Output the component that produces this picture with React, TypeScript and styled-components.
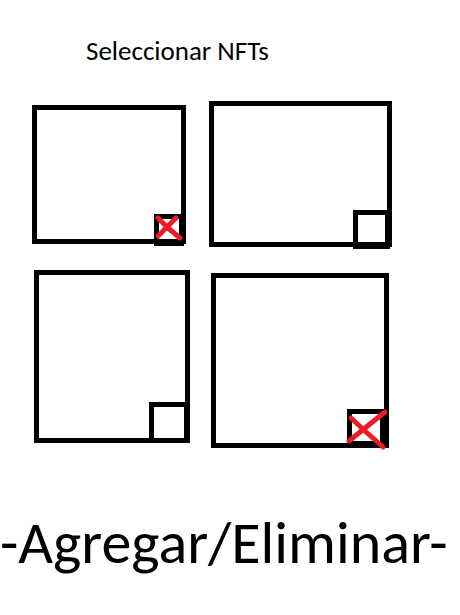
import React, { useState } from "react";
import styled, { createGlobalStyle } from "styled-components";

const GlobalStyle = createGlobalStyle`
  *, *::before, *::after { box-sizing: border-box; }
  body {
    margin: 0;
    background: #fff;
    color: #000;
    font-family: Carlito, Lato, "Open Sans", sans-serif;
  }
`;

const Page = styled.main`
  display: flex;
  flex-direction: column;
  padding-top: 35px;
`;

const Title = styled.h1`
  margin: 0 0 34px;
  padding-left: 86px;
  font-size: 27px;
  line-height: 32px;
  font-weight: 400;
`;

const Gallery = styled.section`
  display: grid;
  grid-template-columns: 177fr 183fr;
  row-gap: 23px;
  align-items: start;
  padding: 0 68px 0 32px;
`;

const Card = styled.article<{ $height: number; $inset: string }>`
  position: relative;
  height: ${(p) => p.$height}px;
  margin: ${(p) => p.$inset};
  border: 5px solid #000;
`;

const Picker = styled.label<{ $size: [number, number]; $corner: [number, number] }>`
  position: absolute;
  width: ${(p) => p.$size[0]}px;
  height: ${(p) => p.$size[1]}px;
  right: ${(p) => p.$corner[0]}px;
  bottom: ${(p) => p.$corner[1]}px;
  cursor: pointer;
`;

const Tick = styled.input`
  appearance: none;
  display: block;
  width: 100%;
  height: 100%;
  margin: 0;
  border: 5px solid #000;
  cursor: pointer;
`;

const Cross = styled.svg`
  position: absolute;
  inset: 0;
  width: 100%;
  height: 100%;
  overflow: visible;
  pointer-events: none;
`;

const Action = styled.button`
  margin: 55px 0 0;
  padding: 0;
  border: 0;
  background: none;
  color: inherit;
  font: inherit;
  font-size: 60px;
  line-height: 80px;
  text-align: left;
  white-space: nowrap;
  cursor: pointer;
`;

type Nft = {
  id: number;
  height: number;
  inset: string;
  size: [number, number];
  corner: [number, number];
  cross: string;
  selected: boolean;
};

const nfts: Nft[] = [
  { id: 1, height: 139, inset: "4px 23px 0 0", size: [30, 32], corner: [-3, -7], cross: "M4 4 L14 14 L26 24 M22 4 L13 13 L4 22", selected: true },
  { id: 2, height: 146, inset: "0", size: [37, 39], corner: [-3, -7], cross: "M4 5 L33 35 M33 4 L4 34", selected: false },
  { id: 3, height: 173, inset: "0 19px 0 2px", size: [40, 41], corner: [-4, -5], cross: "M4 5 L36 37 M36 4 L4 36", selected: false },
  { id: 4, height: 175, inset: "3px 3px 0 2px", size: [38, 37], corner: [-1, -3], cross: "M4 9 L18 22 L36 38 M38 3 L18 19 L2 32", selected: true },
];

export default function App() {
  const [items, setItems] = useState(nfts);

  const toggle = (id: number) =>
    setItems((list) => list.map((n) => (n.id === id ? { ...n, selected: !n.selected } : n)));

  return (
    <>
      <GlobalStyle />
      <Page>
        <Title>Seleccionar NFTs</Title>
        <Gallery>
          {items.map((n) => (
            <Card key={n.id} $height={n.height} $inset={n.inset}>
              <Picker $size={n.size} $corner={n.corner}>
                <Tick
                  type="checkbox"
                  aria-label={`NFT ${n.id}`}
                  checked={n.selected}
                  onChange={() => toggle(n.id)}
                />
                {n.selected && (
                  <Cross viewBox={`0 0 ${n.size[0]} ${n.size[1]}`} aria-hidden="true">
                    <path
                      d={n.cross}
                      fill="none"
                      stroke="#ed1c24"
                      strokeWidth="5"
                      strokeLinecap="round"
                      strokeLinejoin="round"
                    />
                  </Cross>
                )}
              </Picker>
            </Card>
          ))}
        </Gallery>
        <Action type="button">-Agregar/Eliminar-</Action>
      </Page>
    </>
  );
}
